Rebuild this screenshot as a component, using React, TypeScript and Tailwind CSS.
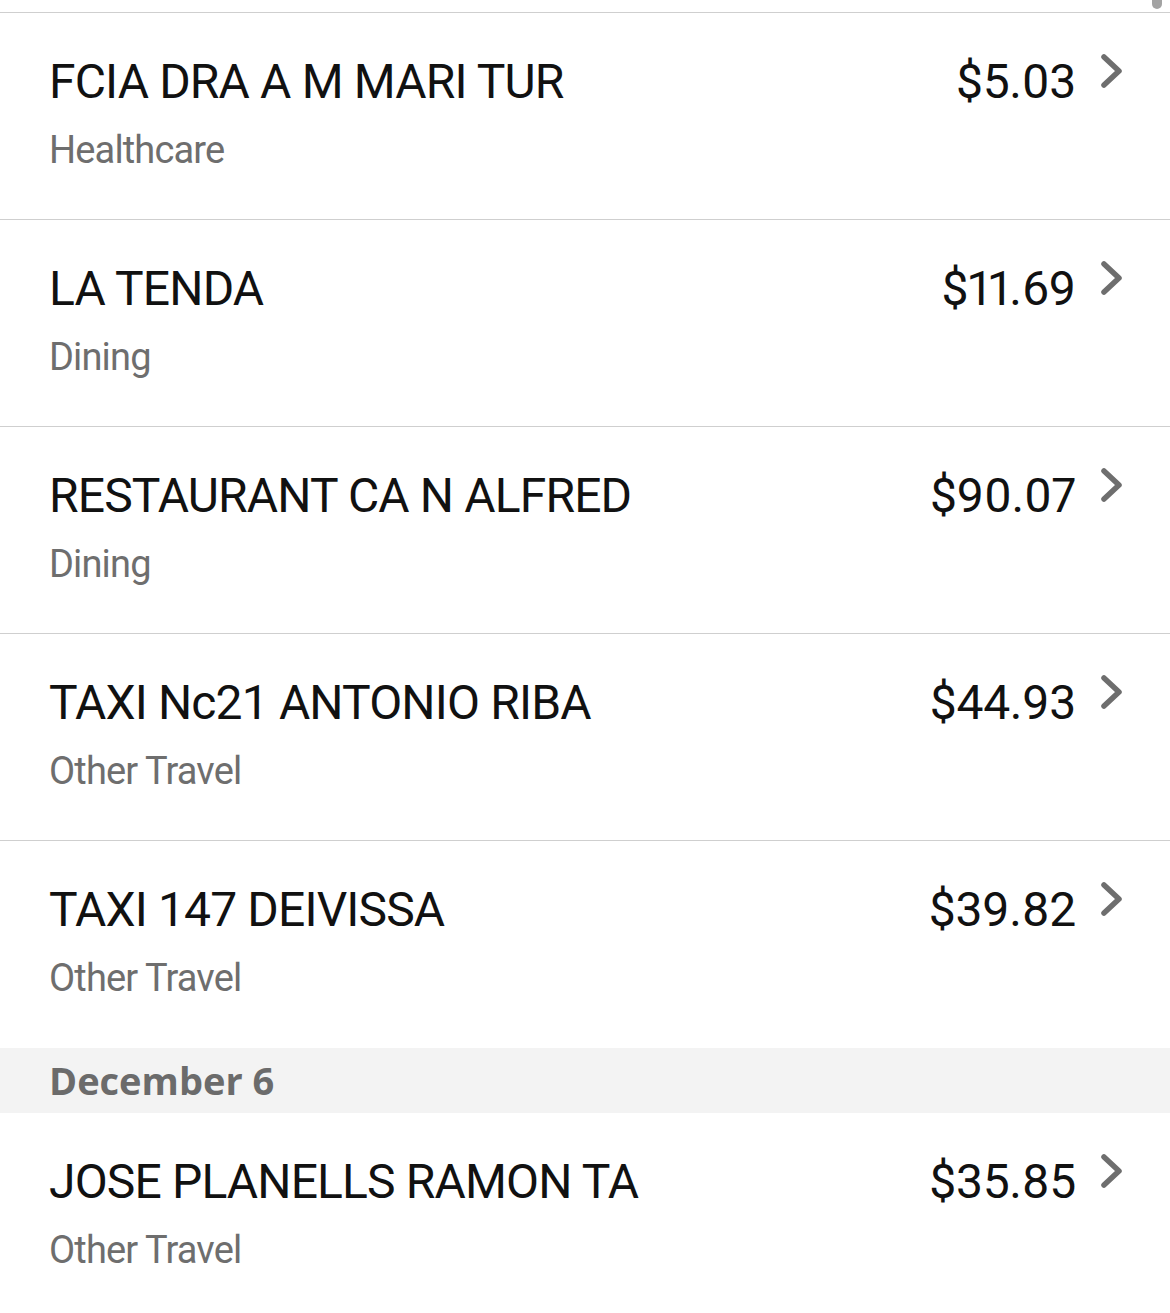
const groups = [
  {
    date: null as string | null,
    items: [
      { name: 'FCIA DRA A M MARI TUR', category: 'Healthcare', amount: '$5.03' },
      { name: 'LA TENDA', category: 'Dining', amount: '$11.69' },
      { name: 'RESTAURANT CA N ALFRED', category: 'Dining', amount: '$90.07' },
      { name: 'TAXI Nc21 ANTONIO RIBA', category: 'Other Travel', amount: '$44.93' },
      { name: 'TAXI 147 DEIVISSA', category: 'Other Travel', amount: '$39.82' },
    ],
  },
  {
    date: 'December 6',
    items: [{ name: 'JOSE PLANELLS RAMON TA', category: 'Other Travel', amount: '$35.85' }],
  },
];

function Chevron() {
  return (
    <svg width="24" height="36" viewBox="0 0 24 36" className="mt-[-1px] shrink-0">
      <path
        d="M4 4 L19 18 L4 32"
        fill="none"
        stroke="#6e6e6e"
        strokeWidth="5.5"
        strokeLinecap="round"
        strokeLinejoin="round"
      />
    </svg>
  );
}

function TransactionRow({
  name,
  category,
  amount,
  last,
}: {
  name: string;
  category: string;
  amount: string;
  last: boolean;
}) {
  return (
    <div className={`h-[207px] pl-[49px] pr-[46px] pt-[41px] ${last ? '' : 'border-b border-[#cfcfcf]'}`}>
      <div className="flex items-start">
        <div className="flex-1 text-[48px] leading-[56px] tracking-[-0.85px] text-[#111111]">{name}</div>
        <div className="text-[48px] leading-[56px] tracking-[-0.3px] proportional-nums text-[#111111]">
          {amount}
        </div>
        <div className="ml-[24px]">
          <Chevron />
        </div>
      </div>
      <div className="mt-[17px] text-[38px] leading-[46px] tracking-[-0.85px] text-[#6e6e6e]">{category}</div>
    </div>
  );
}

export default function App() {
  return (
    <div className="relative w-[1170px] h-[1313px] overflow-hidden bg-white font-['Roboto',sans-serif]">
      {/* scrollbar thumb */}
      <div className="absolute right-[8px] top-0 w-[10px] h-[9px] rounded-b-full bg-[#a3a3a3]" />

      <div className="h-[12px]" />
      <div className="border-t border-[#cfcfcf]">
        {groups.map((group, gi) => (
          <div key={gi}>
            {group.date && (
              <div className="h-[65px] bg-[#f3f3f3] pl-[49px] font-['Open_Sans',sans-serif] text-[38px] leading-[65px] font-bold text-[#6b6b6b]">
                {group.date}
              </div>
            )}
            {group.items.map((item, i) => (
              <TransactionRow
                key={item.name}
                name={item.name}
                category={item.category}
                amount={item.amount}
                last={i === group.items.length - 1}
              />
            ))}
          </div>
        ))}
      </div>
    </div>
  );
}
